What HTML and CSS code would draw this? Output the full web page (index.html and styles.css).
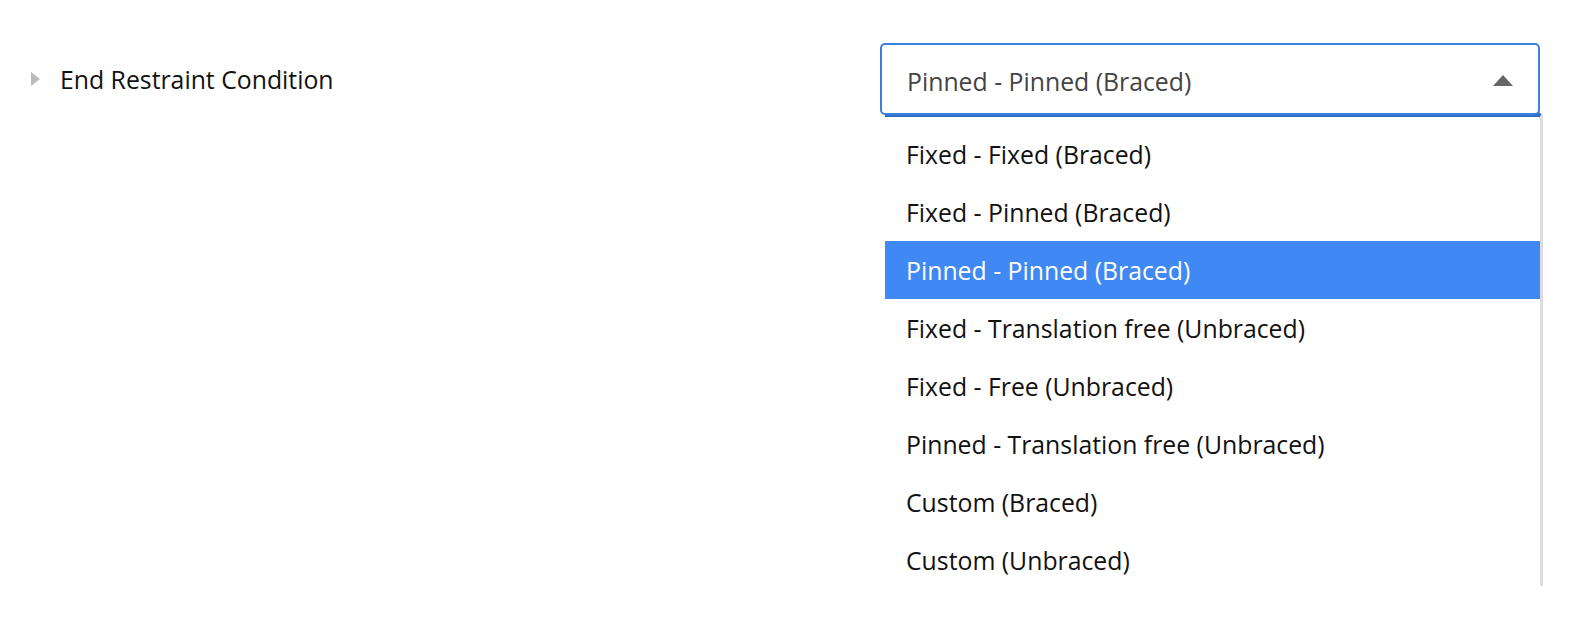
FILE: index.html
```html
<!DOCTYPE html>
<html lang="en">
<head>
    <meta charset="UTF-8">
    <title>End Restraint Condition</title>
    <link rel="stylesheet" href="styles.css">
</head>
<body>

<div class="field">
    <div class="field-label">
        <span class="caret"></span>
        <span>End Restraint Condition</span>
    </div>

    <div class="dropdown">
        <div class="select">
            <span class="select-value">Pinned - Pinned (Braced)</span>
            <span class="arrow-up"></span>
        </div>
        <ul class="options">
            <li>Fixed - Fixed (Braced)</li>
            <li>Fixed - Pinned (Braced)</li>
            <li class="active">Pinned - Pinned (Braced)</li>
            <li>Fixed - Translation free (Unbraced)</li>
            <li>Fixed - Free (Unbraced)</li>
            <li>Pinned - Translation free (Unbraced)</li>
            <li>Custom (Braced)</li>
            <li>Custom (Unbraced)</li>
        </ul>
    </div>
</div>

</body>
</html>
```

FILE: styles.css
```css
body {
    margin: 0;
    background-color: #fff;
    font-family: "Open Sans", "Noto Sans", sans-serif;
    font-size: 24.8px;
    color: #111;
}
.field {
    display: flex;
    justify-content: space-between;
    padding: 43px 44px 0 31px;
}
.field-label {
    display: flex;
    align-items: center;
    gap: 20px;
    height: 72px;
}
.caret {
    width: 0;
    height: 0;
    border-top: 7px solid transparent;
    border-bottom: 7px solid transparent;
    border-left: 9px solid #bbb;
}
.dropdown {
    width: 660px;
}
.select {
    display: flex;
    align-items: center;
    justify-content: space-between;
    height: 72px;
    box-sizing: border-box;
    padding: 3px 25px 0 25px;
    border: 2px solid #3d7fdc;
    border-radius: 5px;
    color: #444;
    background-color: #fff;
    position: relative;
    z-index: 1;
}
.arrow-up {
    width: 0;
    height: 0;
    border-left: 10px solid transparent;
    border-right: 10px solid transparent;
    border-bottom: 11px solid #666;
}
.options {
    list-style: none;
    margin: -3px -3px 0 5px;
    padding: 8px 0 0 0;
    height: 474px;
    overflow: hidden;
    box-sizing: border-box;
    border-top: 5px solid #2f6fc8;
    border-right: 3px solid #ddd;
    border-top-right-radius: 6px;
}
.options li {
    height: 58px;
    line-height: 58px;
    padding-left: 21px;
}
.options li.active {
    background-color: #4088f4;
    color: #fff;
}
```
